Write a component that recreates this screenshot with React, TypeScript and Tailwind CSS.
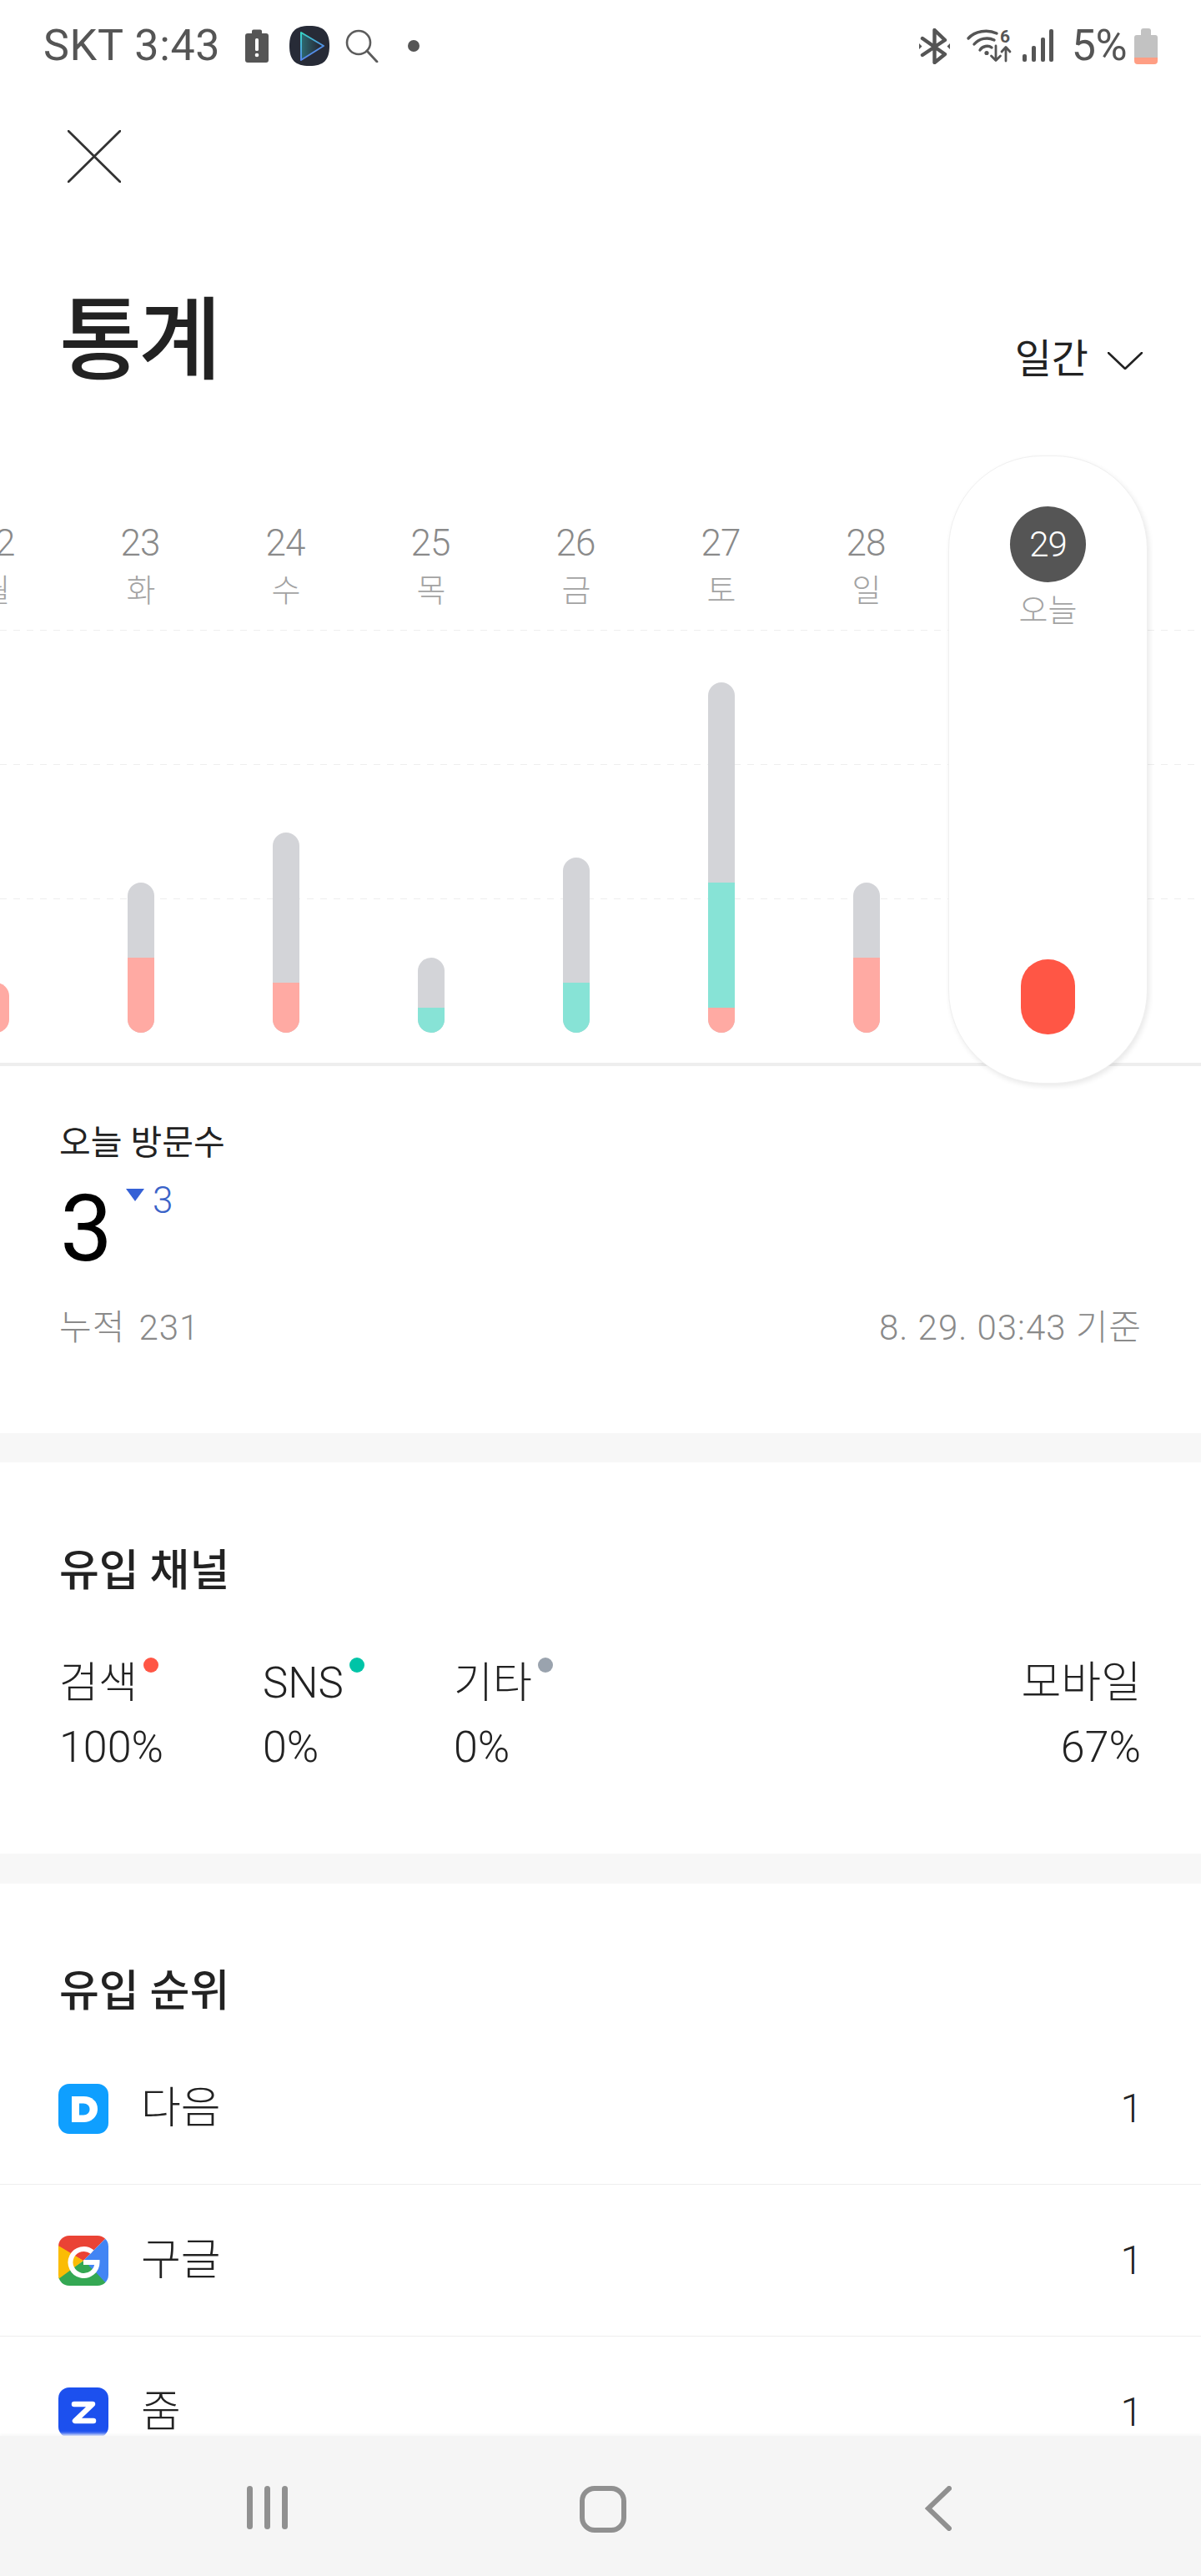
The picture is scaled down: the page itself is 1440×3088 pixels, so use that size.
import React from "react";

type Seg = { day: string; wd: string; total: number; green: number; pink: number };

const days: Seg[] = [
  { day: "22", wd: "월", total: 60, green: 0, pink: 60 },
  { day: "23", wd: "화", total: 180, green: 0, pink: 90 },
  { day: "24", wd: "수", total: 240, green: 0, pink: 60 },
  { day: "25", wd: "목", total: 90, green: 30, pink: 0 },
  { day: "26", wd: "금", total: 210, green: 60, pink: 0 },
  { day: "27", wd: "토", total: 420, green: 150, pink: 30 },
  { day: "28", wd: "일", total: 180, green: 0, pink: 90 },
];

function Column({ d }: { d: Seg }) {
  return (
    <div className="relative z-[1] w-[174px] h-[728px] shrink-0 flex flex-col items-center">
      <div className="mt-[85px] pr-[2px] h-[40px] leading-[40px] text-[44px] font-light text-[#8a8a8a] tracking-[-1px]">{d.day}</div>
      <div className="mt-[17px] h-[40px] leading-[40px] text-[38px] font-light text-[#a3a3a3]">{d.wd}</div>
      <div
        className="mt-auto mb-[36px] w-[32px] rounded-[16px] overflow-hidden bg-[#d3d4d8] flex flex-col justify-end"
        style={{ height: d.total }}
      >
        <div className="bg-[#87e3d6]" style={{ height: d.green }} />
        <div className="bg-[#ffaaa3]" style={{ height: d.pink }} />
      </div>
    </div>
  );
}

function BatteryAlert() {
  return (
    <svg width="28" height="40" viewBox="0 0 28 40" className="ml-[30px]">
      <path d="M8 2.500a2 2 0 0 1 2-2h8a2 2 0 0 1 2 2V5h5a3 3 0 0 1 3 3v29a3 3 0 0 1-3 3H3a3 3 0 0 1-3-3V8a3 3 0 0 1 3-3h5z" fill="#555" />
      <rect x="12" y="11" width="4" height="15" rx="1.600" fill="#fff" />
      <circle cx="14" cy="31" r="2.300" fill="#fff" />
    </svg>
  );
}

function PlayApp() {
  return (
    <svg width="48" height="48" viewBox="0 0 48 48" className="ml-[25px]">
      <defs>
        <linearGradient id="pl" x1="0" y1="0" x2="0.4" y2="1">
          <stop offset="0" stopColor="#35d6c4" />
          <stop offset="1" stopColor="#5c7bf0" />
        </linearGradient>
        <linearGradient id="pf" x1="0" y1="0" x2="1" y2="0">
          <stop offset="0" stopColor="#2c6a72" />
          <stop offset="0.8" stopColor="#272c39" />
        </linearGradient>
      </defs>
      <path d="M24 0C41 0 48 7 48 24S41 48 24 48 0 41 0 24 7 0 24 0z" fill="#272b37" />
      <path d="M14 8 41 24 14 41z" fill="url(#pf)" stroke="url(#pl)" strokeWidth="2" strokeLinejoin="round" />
    </svg>
  );
}

function SearchIcon() {
  return (
    <svg width="40" height="40" viewBox="0 0 40 40" className="ml-[19px]">
      <circle cx="16" cy="16" r="14" fill="none" stroke="#5c5c5c" strokeWidth="2.600" />
      <path d="M26 26 38 39" stroke="#5c5c5c" strokeWidth="2.800" strokeLinecap="round" />
    </svg>
  );
}

function Bluetooth() {
  return (
    <svg width="37" height="43" viewBox="0 0 37 43">
      <path d="M4 12 31 31 18.500 41V2L31 14 4 32" fill="none" stroke="#555" strokeWidth="4.400" strokeLinejoin="round" strokeLinecap="round" />
      <path d="M0 18v7l3.500-3.500zM37 18v7l-3.500-3.500z" fill="#555" />
    </svg>
  );
}

function WifiSix() {
  return (
    <svg width="55" height="42" viewBox="0 0 55 42" className="ml-[20px] overflow-visible">
      <g fill="none" stroke="#555" strokeWidth="3.400" strokeLinecap="round">
        <path d="M2 12C10 3 25 1 36 6" />
        <path d="M9 19C15 12 25 10 33 14" />
        <path d="M16 26C19 21 26 20 30 23" />
        <path d="M35 21V38M29.500 33l5.500 5.500 5.500-5.500" strokeWidth="2.800" strokeLinejoin="round" />
        <path d="M47 39V23M42 28l5-5.500 5 5.500" strokeWidth="2.800" strokeLinejoin="round" />
      </g>
      <circle cx="24" cy="29.500" r="2.600" fill="#555" />
      <text x="46" y="17" textAnchor="middle" fontFamily="Roboto, sans-serif" fontWeight="700" fontSize="21" fill="#555">6</text>
    </svg>
  );
}

function Signal() {
  return (
    <svg width="38" height="40" viewBox="0 0 38 40" className="ml-[12px]">
      <g fill="#555">
        <rect x="0" y="30" width="5" height="9" rx="2" />
        <rect x="11" y="20" width="5" height="19" rx="2" />
        <rect x="22" y="10" width="5" height="29" rx="2" />
        <rect x="32" y="0" width="5" height="39" rx="2" />
      </g>
    </svg>
  );
}

function Battery() {
  return (
    <svg width="28" height="43" viewBox="0 0 28 43" className="ml-[9px]">
      <path d="M8 3a3 3 0 0 1 3-3h6a3 3 0 0 1 3 3v5h5a3 3 0 0 1 3 3v24H0V11a3 3 0 0 1 3-3h5z" fill="#c2c2c2" />
      <path d="M0 35h28v4a4 4 0 0 1-4 4H4a4 4 0 0 1-4-4z" fill="#ff9e84" />
    </svg>
  );
}

function StatusBar() {
  return (
    <div className="h-[110px] pl-[52px] pr-[52px] flex items-center justify-between text-[#555]">
      <div className="flex items-center">
        <span className="text-[52px] leading-[56px] tracking-[0.7px] whitespace-pre">SKT 3:43</span>
        <BatteryAlert />
        <PlayApp />
        <SearchIcon />
        <span className="ml-[35px] w-[14px] h-[14px] rounded-full bg-[#555]" />
      </div>
      <div className="flex items-center">
        <Bluetooth />
        <WifiSix />
        <Signal />
        <span className="ml-[21px] text-[52px] leading-[56px] tracking-[-0.5px]">5%</span>
        <Battery />
      </div>
    </div>
  );
}

function Daum() {
  return (
    <svg width="60" height="60" viewBox="0 0 60 60" className="shrink-0">
      <rect width="60" height="60" rx="13" fill="#0f9fff" />
      <path d="M16 15h14.500C40 15 47 21 47 30s-7 16-16.500 16H16z" fill="#fff" />
      <path d="M25 23.500v14h5c4.500 0 7.500-3 7.500-7s-3-7-7.500-7z" fill="#0f9fff" />
    </svg>
  );
}

function Google() {
  return (
    <svg width="60" height="60" viewBox="0 0 60 60" className="shrink-0">
      <defs>
        <clipPath id="gc"><rect width="60" height="60" rx="13" /></clipPath>
      </defs>
      <g clipPath="url(#gc)">
        <path d="M0 0h60L30 30 0 14z" fill="#ea4335" />
        <path d="M60 0v60L45 46 30 30z" fill="#4285f4" />
        <path d="M0 60h60L45 44 30 30 0 50z" fill="#34a853" />
        <path d="M0 12 30 30 0 52z" fill="#fbbc05" />
      </g>
      <path d="M40.500 19.500A16 16 0 1 0 46.500 32H30" fill="none" stroke="#fff" strokeWidth="6" />
      <path d="M30 30l-7-5a9 9 0 0 1 9-3z" fill="#ea4335" />
      <path d="M22 32.500a9 9 0 0 1 .5-6L29 30z" fill="#fbbc05" />
      <path d="M23 35h14a8.500 8.500 0 0 1-14 0z" fill="#34a853" />
    </svg>
  );
}

function Zum() {
  return (
    <svg width="60" height="60" viewBox="0 0 60 60" className="shrink-0">
      <rect width="60" height="60" rx="13" fill="#1c50ee" />
      <path d="M19 20h22L20 40h22" fill="none" stroke="#fff" strokeWidth="6.500" strokeLinecap="round" strokeLinejoin="round" />
    </svg>
  );
}

function Row({ icon, name, value, last }: { icon: React.ReactNode; name: string; value: string; last?: boolean }) {
  return (
    <div className={"h-[182px] pl-[70px] pr-[70px] flex items-center " + (last ? "" : "border-b border-[#eeeeee]")}>
      {icon}
      <span className="ml-[39px] text-[52px] font-light text-[#222]">{name}</span>
      <span className="ml-auto text-[48px] font-light text-[#222]">{value}</span>
    </div>
  );
}

function Channel({ label, value, dot, w }: { label: string; value: string; dot: string; w: string }) {
  return (
    <div className={w}>
      <div className="h-[60px] flex items-center">
        <span className="text-[51px] leading-[60px] font-light text-[#222]">{label}</span>
        <span className={"ml-[7px] mb-[44px] w-[18px] h-[18px] rounded-full " + dot} />
      </div>
      <div className="mt-[22px] h-[50px] text-[52px] leading-[50px] font-light text-[#222]">{value}</div>
    </div>
  );
}

function GridLine({ top }: { top: string }) {
  return <div className={"absolute left-0 right-0 h-px bg-[repeating-linear-gradient(90deg,#eeeeee_0_8px,transparent_8px_16px)] " + top} />;
}

export default function App() {
  return (
    <div className="relative w-[1440px] h-[3088px] overflow-hidden bg-white flex flex-col font-['Roboto','Noto_Sans_CJK_KR',sans-serif]">
      <main className="h-[2920px] shrink-0 overflow-hidden">
        <StatusBar />
        <div className="mt-[46px] pl-[81px]">
          <svg width="64" height="63" viewBox="0 0 64 63">
            <path d="M1 1 63 62M63 1 1 62" stroke="#333" strokeWidth="2.800" strokeLinecap="round" />
          </svg>
        </div>
        <div className="mt-[134px] pl-[71px] pr-[70px] flex items-end justify-between">
          <h1 className="text-[108px] leading-[112px] font-medium text-[#222] tracking-[-4px]">통계</h1>
          <div className="mb-[10px] flex items-center h-[48px]">
            <span className="text-[48px] leading-[48px] font-normal text-[#222]">일간</span>
            <svg width="42" height="21" viewBox="0 0 42 21" className="ml-[23px] mt-[2px]">
              <path d="M1 1 21 20 41 1" fill="none" stroke="#222" strokeWidth="2.600" strokeLinecap="round" strokeLinejoin="round" />
            </svg>
          </div>
        </div>

        <section className="relative mt-[81px] h-[728px] flex items-start">
          <GridLine top="top-[209px]" />
          <GridLine top="top-[370px]" />
          <GridLine top="top-[531px]" />
          <div className="ml-[-92px] flex shrink-0">
            {days.map((d) => (
              <Column key={d.day} d={d} />
            ))}
          </div>
          <div className="relative z-10 ml-[11px] w-[239px] h-[753px] shrink-0 rounded-[112px] bg-white border border-[#f0f0f0] shadow-[2px_3px_6px_rgba(0,0,0,0.09)] flex flex-col items-center">
            <div className="mt-[60px] w-[91px] h-[91px] rounded-full bg-[#555] flex items-center justify-center text-white text-[42px] font-light tracking-[-1px]">29</div>
            <div className="mt-[14px] h-[40px] leading-[40px] text-[38px] font-light text-[#a3a3a3]">오늘</div>
            <div className="mt-auto mb-[58px] w-[65px] h-[90px] rounded-[32px] bg-[#ff5645]" />
          </div>
        </section>
        <div className="h-[4px] bg-[#eeeeee]" />

        <section className="h-[440px] pt-[70px] px-[71px]">
          <div className="h-[44px] leading-[44px] text-[41px] font-normal text-[#222]">오늘 방문수</div>
          <div className="mt-[25px] ml-px flex items-start h-[112px]">
            <span className="text-[112px] leading-[112px] text-black">3</span>
            <svg width="22" height="15" viewBox="0 0 22 15" className="ml-[16px] mt-[8px]">
              <path d="M0 0h22L11 15z" fill="#3561d6" />
            </svg>
            <span className="ml-[10px] text-[44px] leading-[44px] font-light text-[#3a63c8]">3</span>
          </div>
          <div className="mt-[39px] h-[48px] leading-[48px] flex justify-between text-[42px] font-light text-[#8a8a8a] tracking-[1px]">
            <span className="[word-spacing:5px]">누적 231</span>
            <span>8. 29. 03:43 기준</span>
          </div>
        </section>
        <div className="h-[35px] bg-[#f7f7f7]" />

        <section className="h-[469px] pt-[107px] pl-[71px] pr-[72px]">
          <h2 className="h-[48px] leading-[48px] text-[52px] font-medium text-[#222]">유입 채널</h2>
          <div className="mt-[80px] flex">
            <Channel label="검색" value="100%" dot="bg-[#ff5645]" w="w-[244px]" />
            <Channel label="SNS" value="0%" dot="bg-[#00c4a7]" w="w-[229px]" />
            <Channel label="기타" value="0%" dot="bg-[#9aa3ae]" w="w-[200px]" />
            <div className="flex-1 text-right">
              <div className="h-[60px] leading-[60px] text-[52px] font-light text-[#222]">모바일</div>
              <div className="mt-[22px] h-[50px] leading-[50px] text-[52px] font-light text-[#222]">67%</div>
            </div>
          </div>
        </section>
        <div className="h-[36px] bg-[#f7f7f7]" />

        <section>
          <h2 className="mt-[106px] pl-[71px] h-[48px] leading-[48px] text-[52px] font-medium text-[#222]">유입 순위</h2>
          <div className="mt-[25px]">
            <Row icon={<Daum />} name="다음" value="1" />
            <Row icon={<Google />} name="구글" value="1" />
            <Row icon={<Zum />} name="줌" value="1" last />
          </div>
        </section>
      </main>

      <nav className="h-[168px] shrink-0 bg-[#f5f5f5] shadow-[0_-2px_4px_#f8f8f8] relative z-20 flex items-start pt-[60px]">
        <div className="ml-[296px] h-[52px] flex gap-[14px]">
          <span className="w-[7px] h-[52px] rounded-full bg-[#909090]" />
          <span className="w-[7px] h-[52px] rounded-full bg-[#909090]" />
          <span className="w-[7px] h-[52px] rounded-full bg-[#909090]" />
        </div>
        <div className="ml-[350px] w-[56px] h-[56px] rounded-[18px] border-[6px] border-[#909090]" />
        <svg width="32" height="54" viewBox="0 0 32 54" className="ml-[358px]">
          <path d="M29 3 4 27l25 24" fill="none" stroke="#909090" strokeWidth="6" strokeLinecap="round" />
        </svg>
      </nav>
    </div>
  );
}
